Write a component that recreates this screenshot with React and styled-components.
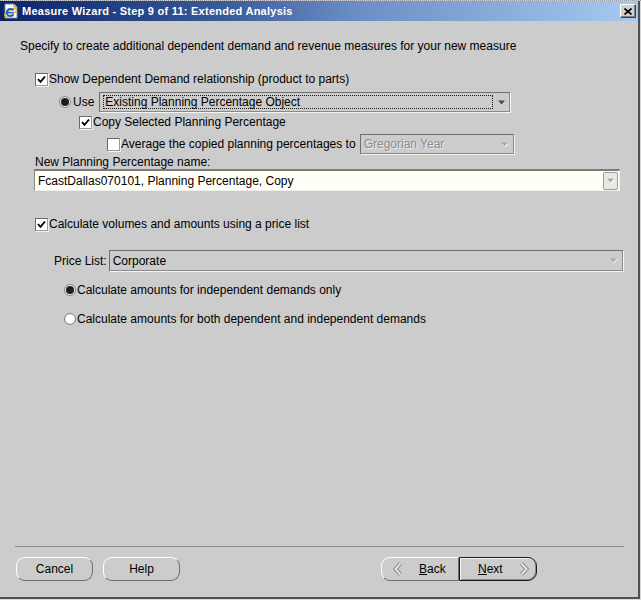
import React from "react";
import styled, { createGlobalStyle } from "styled-components";

const GlobalStyle = createGlobalStyle`
  html, body { margin: 0; padding: 0; background: #d4d0c8; }
  body { font-family: "Liberation Sans", Arial, sans-serif; }
  * { box-sizing: border-box; }
`;

const Window = styled.div`
  width: 641px;
  height: 600px;
  padding: 0 1px 1px 0;
  background: #d8d8d8;
  border-top: 1px dotted #9a9a9a;
  display: flex;
`;

const Panel = styled.div`
  flex: 1;
  display: flex;
  flex-direction: column;
  background: #cccccc;
  border-right: 2px solid #505050;
  border-bottom: 2px solid #505050;
`;

const TitleBar = styled.div`
  height: 20px;
  display: flex;
  align-items: center;
  padding: 0 2px 0 3px;
  background: linear-gradient(to right, #0a246a 0%, #3a5a98 35%, #6a8cc4 55%, #a6caf0 100%);
`;

const Title = styled.span`
  margin-left: 3px;
  color: #ffffff;
  font-family: "Liberation Sans", Arial, sans-serif;
  font-weight: bold;
  font-size: 11px;
  letter-spacing: 0.25px;
  white-space: nowrap;
`;

const CloseButton = styled.div`
  margin-left: auto;
  width: 16px;
  height: 14px;
  background: #d4d0c8;
  border: 1px solid;
  border-color: #ffffff #404040 #404040 #ffffff;
  box-shadow: inset -1px -1px 0 #808080;
  display: flex;
  align-items: center;
  justify-content: center;
`;

const Body = styled.div`
  flex: 1;
  display: flex;
  flex-direction: column;
  font-size: 12px;
  color: #000;
`;

const Row = styled.div`
  display: flex;
  align-items: center;
  height: ${(p) => p.$h || 16}px;
  margin-top: ${(p) => p.$mt || 0}px;
  padding-left: ${(p) => p.$ml || 0}px;
  white-space: nowrap;
`;

const Label = styled.span`
  color: ${(p) => (p.$disabled ? "#8a8a8a" : "#000")};
  margin-left: ${(p) => p.$ml || 0}px;
  margin-right: ${(p) => p.$mr || 0}px;
`;

const BoxFrame = styled.span`
  display: inline-flex;
  width: 13px;
  height: 13px;
  flex: none;
  background: #ffffff;
  border: 1px solid;
  border-color: #6a6a6a #9a9a9a #9a9a9a #6a6a6a;
  box-shadow: 1px 1px 0 #f2f2f2;
  align-items: center;
  justify-content: center;
`;

const RadioFrame = styled.span`
  display: inline-flex;
  width: 12px;
  height: 12px;
  flex: none;
`;

const SelectBox = styled.div`
  display: flex;
  align-items: center;
  width: ${(p) => p.$w}px;
  height: ${(p) => p.$h || 20}px;
  margin-left: ${(p) => p.$ml || 0}px;
  padding: 0 0 0 3px;
  background: ${(p) => p.$bg || "#cccccc"};
  border: 1px solid;
  border-color: #6e6e6e #8a8a8a #8a8a8a #6e6e6e;
  box-shadow: 1px 1px 0 #f4f4f4;
  color: ${(p) => (p.$disabled ? "#8c8c8c" : "#000")};
  text-shadow: ${(p) => (p.$disabled ? "1px 1px 0 #ececec" : "none")};
`;

const FocusText = styled.span`
  flex: 1;
  height: 14px;
  line-height: 12px;
  border: 1px dotted #1a1a1a;
  padding-left: 1px;
  margin-right: 0;
`;

const SelectText = styled.span`
  flex: 1;
`;

const ArrowSlot = styled.span`
  width: 16px;
  height: 100%;
  display: flex;
  align-items: center;
  justify-content: center;
`;

const InputBox = styled.div`
  display: flex;
  align-items: center;
  width: 586px;
  height: 22px;
  margin-left: 34px;
  padding-left: 3px;
  background: #fffff6;
  border-top: 2px solid #7a7a7a;
  border-left: 1px solid #8a8a8a;
  border-bottom: 1px solid #f0f0f0;
  border-right: 1px solid #f0f0f0;
`;

const InputArrow = styled.span`
  width: 15px;
  height: 18px;
  margin-right: 1px;
  border: 1px solid #9a9a9a;
  border-radius: 2px;
  background: #e8e8e4;
  display: flex;
  align-items: center;
  justify-content: center;
`;

const Footer = styled.div`
  margin-top: auto;
  padding-bottom: 16px;
`;

const Separator = styled.div`
  height: 1px;
  margin: 0 14px 0 15px;
  background: #8e8e8e;
`;

const ButtonBar = styled.div`
  display: flex;
  align-items: center;
  margin-top: 10px;
  padding-left: 16px;
  padding-right: 101px;
`;

const Button = styled.div`
  width: 77px;
  height: 24px;
  margin-right: 10px;
  display: flex;
  align-items: center;
  justify-content: center;
  background: #cccccc;
  border: 1px solid;
  border-color: #ffffff #6e6e6e #6e6e6e #ffffff;
  border-radius: 9px;
  font-size: 12px;
`;

const NavGroup = styled.div`
  display: flex;
  margin-left: auto;
`;

const NavButton = styled.div`
  width: 78px;
  height: 24px;
  display: flex;
  align-items: center;
  padding: ${(p) => (p.$side === "left" ? "0 0 0 11px" : "0 0 0 18px")};
  gap: 16px;
  background: #cccccc;
  font-size: 12px;
  border: 1px solid;
  border-radius: ${(p) => (p.$side === "left" ? "9px 0 0 9px" : "0 9px 9px 0")};
  border-color: ${(p) =>
    p.$default ? "#1a1a1a" : "#ffffff #6e6e6e #6e6e6e #ffffff"};
  box-shadow: ${(p) =>
    p.$default ? "inset 1px 1px 0 #f4f4f4, inset -1px -1px 0 #8a8a8a" : "none"};
`;

const AppIcon = () => (
  <svg width="16" height="16" viewBox="0 0 16 16">
    <path d="M2 1 H11 L14 4 V15 H2 Z" fill="#ffffff" stroke="#8a8a8a" strokeWidth="1" />
    <path d="M11 1 V4 H14" fill="#dcdcdc" stroke="#8a8a8a" strokeWidth="1" />
    <ellipse cx="7.5" cy="9.5" rx="6.5" ry="2.4" fill="none" stroke="#e8b400" strokeWidth="1.2" transform="rotate(-30 7.5 9.5)" />
    <circle cx="7.5" cy="9.5" r="3.6" fill="none" stroke="#1a5fd0" strokeWidth="2" strokeDasharray="18 5" strokeDashoffset="-2" />
    <rect x="4.5" y="8.8" width="6" height="1.6" fill="#1a5fd0" />
  </svg>
);

const CloseIcon = () => (
  <svg width="8" height="7" viewBox="0 0 8 7">
    <path d="M0.5 0.5 L7.5 6.5 M7.5 0.5 L0.5 6.5" stroke="#000" strokeWidth="1.6" />
  </svg>
);

const Check = ({ checked }) => (
  <BoxFrame>
    {checked && (
      <svg width="9" height="9" viewBox="0 0 9 9">
        <path d="M1 4.2 L3.5 6.8 L8 1.5" fill="none" stroke="#000" strokeWidth="1.9" />
      </svg>
    )}
  </BoxFrame>
);

const Radio = ({ checked }) => (
  <RadioFrame>
    <svg width="12" height="12" viewBox="0 0 12 12">
      <circle cx="6" cy="6" r="5.4" fill="#ffffff" stroke="#7a7a7a" strokeWidth="1" />
      {checked && <circle cx="6" cy="6" r="4" fill="#1c1c1c" />}
    </svg>
  </RadioFrame>
);

const DownArrow = ({ disabled }) => (
  <svg width="9" height="5" viewBox="0 0 9 5">
    {disabled && <path d="M1 1 H8 L4.5 4.6 Z" fill="#ffffff" transform="translate(0.6 0.6)" />}
    <path d="M1 0.5 H8 L4.5 4.5 Z" fill={disabled ? "#a8a8a8" : "#4a4a4a"} />
  </svg>
);

const Chevron = ({ dir }) => {
  const d = dir === "left" ? "M7.5 1.5 L2.5 7 L7.5 12.5" : "M2.5 1.5 L7.5 7 L2.5 12.5";
  return (
    <svg width="10" height="14" viewBox="0 0 10 14">
      <path d={d} fill="none" stroke="#8c8c8c" strokeWidth="4" />
      <path d={d} fill="none" stroke="#eeeeee" strokeWidth="1.8" />
    </svg>
  );
};

export default function App() {
  return (
    <>
      <GlobalStyle />
      <Window>
        <Panel>
          <TitleBar>
            <AppIcon />
            <Title>Measure Wizard - Step 9 of 11: Extended Analysis</Title>
            <CloseButton>
              <CloseIcon />
            </CloseButton>
          </TitleBar>
          <Body>
            <Row $mt={17} $ml={20}>
              <Label>Specify to create additional dependent demand and revenue measures for your new measure</Label>
            </Row>
            <Row $mt={17} $ml={35}>
              <Check checked />
              <Label $ml={1}>Show Dependent Demand relationship (product to parts)</Label>
            </Row>
            <Row $mt={5} $ml={59} $h={20}>
              <Radio checked />
              <Label $ml={2}>Use</Label>
              <SelectBox $w={411} $ml={5}>
                <FocusText>Existing Planning Percentage Object</FocusText>
                <ArrowSlot>
                  <DownArrow />
                </ArrowSlot>
              </SelectBox>
            </Row>
            <Row $mt={2} $ml={79}>
              <Check checked />
              <Label $ml={1}>Copy Selected Planning Percentage</Label>
            </Row>
            <Row $mt={4} $ml={107} $h={20}>
              <Check />
              <Label $ml={1}>Average the copied planning percentages to</Label>
              <SelectBox $w={154} $ml={4} $disabled>
                <SelectText>Gregorian Year</SelectText>
                <ArrowSlot>
                  <DownArrow disabled />
                </ArrowSlot>
              </SelectBox>
            </Row>
            <Row $mt={1} $ml={35} $h={14}>
              <Label>New Planning Percentage name:</Label>
            </Row>
            <Row $h={22}>
              <InputBox>
                <SelectText>FcastDallas070101, Planning Percentage, Copy</SelectText>
                <InputArrow>
                  <DownArrow disabled />
                </InputArrow>
              </InputBox>
            </Row>
            <Row $mt={25} $ml={35}>
              <Check checked />
              <Label $ml={1}>Calculate volumes and amounts using a price list</Label>
            </Row>
            <Row $mt={18} $ml={54} $h={21}>
              <Label $mr={2}>Price List:</Label>
              <SelectBox $w={514} $h={21}>
                <SelectText>Corporate</SelectText>
                <ArrowSlot>
                  <DownArrow disabled />
                </ArrowSlot>
              </SelectBox>
            </Row>
            <Row $mt={11} $ml={64}>
              <Radio checked />
              <Label $ml={1}>Calculate amounts for independent demands only</Label>
            </Row>
            <Row $mt={13} $ml={64}>
              <Radio />
              <Label $ml={1}>Calculate amounts for both dependent and independent demands</Label>
            </Row>
            <Footer>
              <Separator />
              <ButtonBar>
                <Button>Cancel</Button>
                <Button>Help</Button>
                <NavGroup>
                  <NavButton $side="left">
                    <Chevron dir="left" />
                    <span>
                      <u>B</u>ack
                    </span>
                  </NavButton>
                  <NavButton $side="right" $default>
                    <span>
                      <u>N</u>ext
                    </span>
                    <Chevron dir="right" />
                  </NavButton>
                </NavGroup>
              </ButtonBar>
            </Footer>
          </Body>
        </Panel>
      </Window>
    </>
  );
}
